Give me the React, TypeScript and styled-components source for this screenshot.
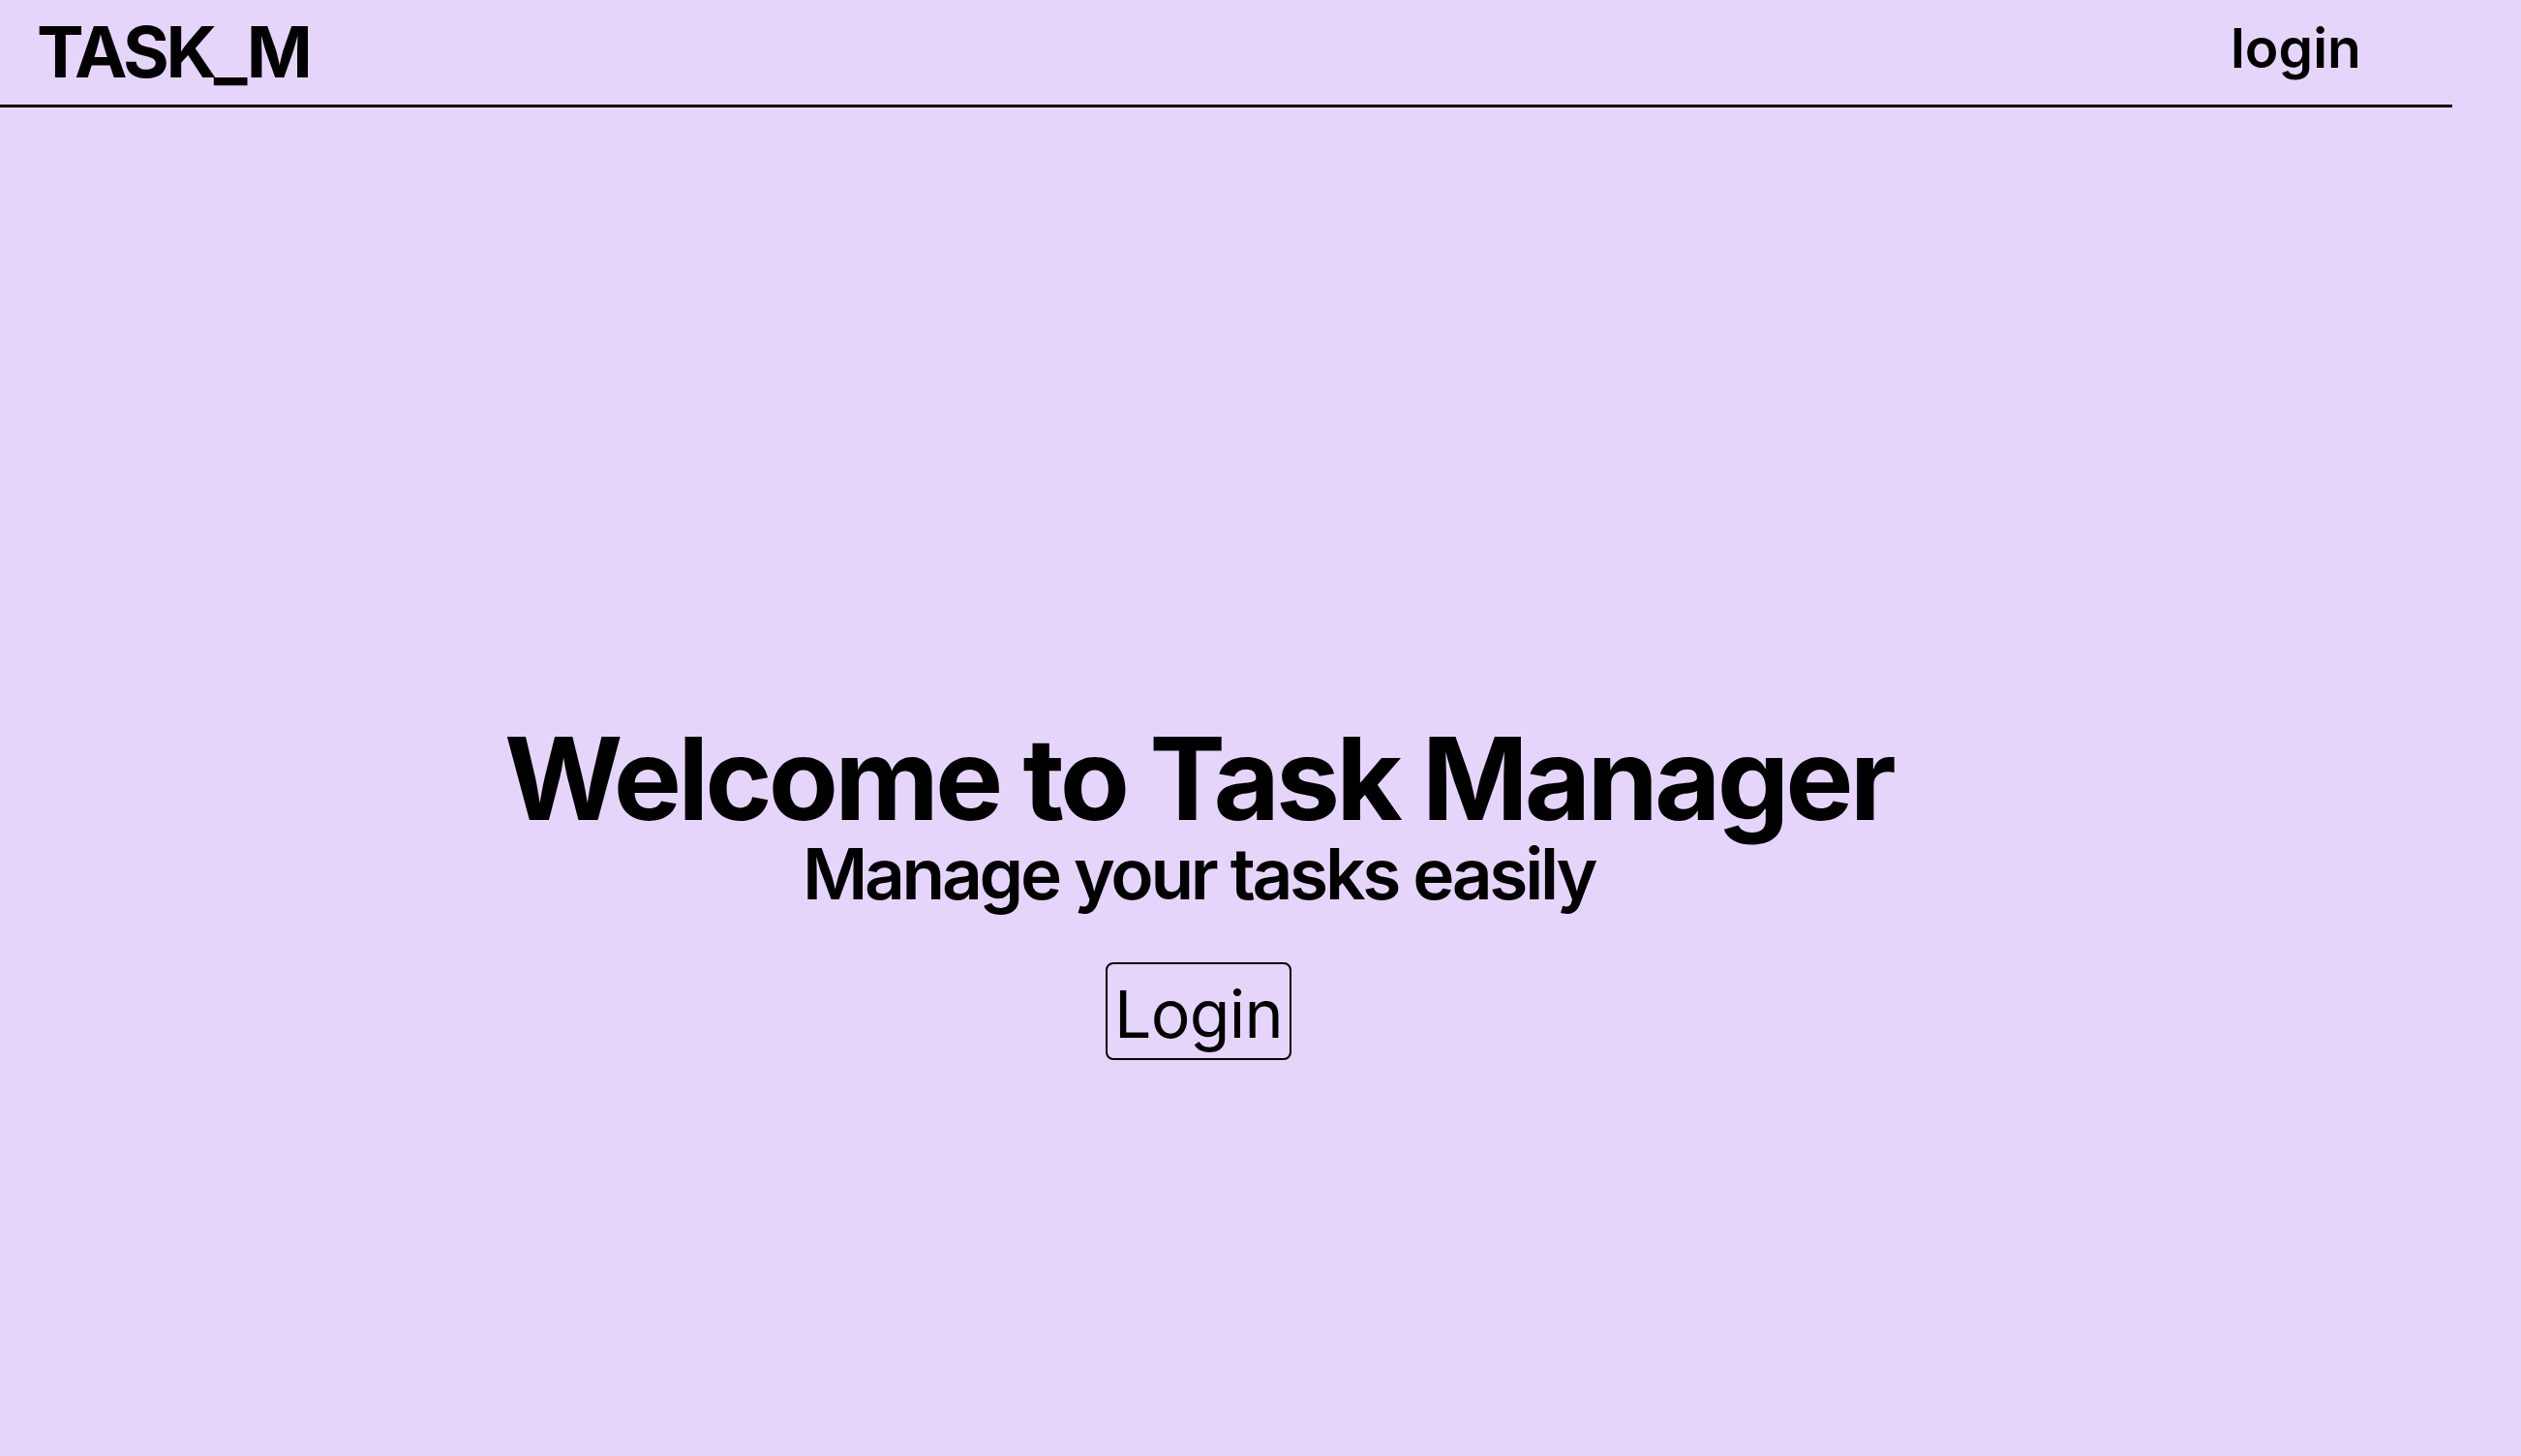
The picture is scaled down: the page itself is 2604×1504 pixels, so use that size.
import React from 'react';
import styled, {createGlobalStyle} from 'styled-components';

const GlobalStyle = createGlobalStyle`
  html, body {
    margin: 0;
    padding: 0;
    background: #e6d5fa;
  }
  body {
    font-family: Inter, "Noto Sans", sans-serif;
    color: #000;
  }
`;

const Page = styled.div`
  min-height: 100vh;
  background: #e6d5fa;
`;

const Header = styled.header`
  width: 2533px;
  box-sizing: border-box;
  display: flex;
  align-items: flex-start;
  justify-content: space-between;
  padding: 17px 94px 18px 38px;
  border-bottom: 3px solid #000;
`;

const Brand = styled.div`
  font-size: 73px;
  font-weight: 700;
  line-height: 1;
  letter-spacing: -0.045em;
`;

const NavLink = styled.a`
  margin-top: 4px;
  font-size: 57px;
  font-weight: 600;
  line-height: 1;
  color: #000;
  text-decoration: none;
  cursor: pointer;
`;

const Main = styled.main`
  width: 2476px;
  display: flex;
  flex-direction: column;
  align-items: center;
  padding-top: 634px;
`;

const Title = styled.h1`
  margin: 0;
  font-size: 118px;
  font-weight: 700;
  line-height: 1;
  letter-spacing: -0.033em;
`;

const Subtitle = styled.h2`
  margin: 3px 0 0;
  font-size: 73px;
  font-weight: 600;
  line-height: 1;
  letter-spacing: -0.045em;
`;

const LoginButton = styled.button`
  margin-top: 55px;
  padding: 10px 7px 5px 7px;
  font-family: Inter, "Noto Sans", sans-serif;
  font-size: 68px;
  font-weight: 400;
  letter-spacing: -0.01em;
  color: #000;
  background: transparent;
  border: 2px solid #000;
  border-radius: 8px;
  cursor: pointer;
`;

export default function App() {
  return (
    <Page>
      <GlobalStyle />
      <Header>
        <Brand>TASK_M</Brand>
        <NavLink>login</NavLink>
      </Header>
      <Main>
        <Title>Welcome to Task Manager</Title>
        <Subtitle>Manage your tasks easily</Subtitle>
        <LoginButton>Login</LoginButton>
      </Main>
    </Page>
  );
}
